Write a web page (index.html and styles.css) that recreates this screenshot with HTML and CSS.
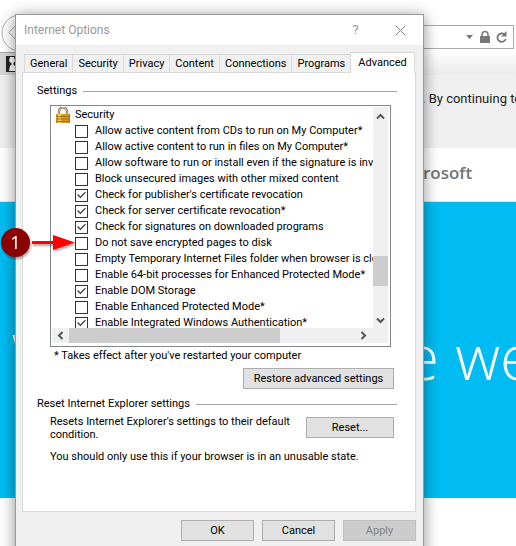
FILE: index.html
```html
<!DOCTYPE html>
<html lang="en">
<head>
<meta charset="utf-8">
<title>Internet Options</title>
<link rel="stylesheet" href="styles.css">
</head>
<body>
<div class="browser">
  <header class="navbar">
    <svg class="back" width="38" height="38" viewBox="0 0 38 38" fill="none" stroke="#b0b0b0"><circle cx="19" cy="19" r="18"/><path d="M17 9 8 18.500l9 9.500"/></svg>
    <div class="address">
      <svg width="8" height="4" viewBox="0 0 8 4"><path d="M0 0h7L3.500 4z" fill="#777"/></svg>
      <svg width="10" height="12" viewBox="0 0 10 12"><path d="M0 5h10v7H0z" fill="#777"/><path d="M2 6V3.500a3 3 0 0 1 6 0V6" fill="none" stroke="#777" stroke-width="1.500"/></svg>
      <svg width="11" height="12" viewBox="0 0 11 12"><path d="M8.500 3.500A4.200 4.200 0 1 0 9.700 8" fill="none" stroke="#777" stroke-width="1.800"/><path d="M10.500 0v5.500H5z" fill="#777"/></svg>
    </div>
  </header>
  <div class="tabstrip">
    <div class="browser-tab">
      <svg width="14" height="16" viewBox="0 0 14 16"><path d="M0 0h14v16H0z" fill="#202528"/><path d="M4 1h4l1 4-2 3 3 3v4H3l1-5 2-2-3-3z" fill="#fff"/></svg>
    </div>
  </div>
  <div class="notice">. By continuing to</div>
  <div class="brand"><span class="more">⋮</span><span>rosoft</span></div>
  <div class="hero"><span>W</span><span class="hero-end">e we</span></div>
</div>

<main class="dialog">
  <header class="titlebar">
    <h1>Internet Options</h1>
    <button class="title-btn" aria-label="Help">?</button>
    <button class="title-btn" aria-label="Close"><svg width="11" height="11" viewBox="0 0 11 11"><path d="M.5.5l10 10M10.500.5l-10 10" stroke="#858585"/></svg></button>
  </header>
  <div class="content">
    <nav class="tabs" role="tablist">
      <button role="tab">General</button>
      <button role="tab">Security</button>
      <button role="tab">Privacy</button>
      <button role="tab">Content</button>
      <button role="tab">Connections</button>
      <button role="tab">Programs</button>
      <button role="tab" class="active" aria-selected="true">Advanced</button>
    </nav>
    <section class="panel">
      <h2>Settings</h2>
      <div class="listbox">
        <div class="options">
          <div class="category">
            <svg width="14" height="16" viewBox="0 0 14 16"><path d="M3 8V4.500a4 4 0 0 1 8 0V8" fill="none" stroke="#8a7440" stroke-width="2.500"/><path d="M3 8V4.500a4 4 0 0 1 8 0V8" fill="none" stroke="#d9cda6"/><path d="M0 7h14v9H0z" fill="#d39a22"/><path d="M2 7h3v9H2z" fill="#f3cf62"/><path d="M0 9.500h14M0 12h14M0 14.500h14M13.500 7v9" stroke="#a87412"/></svg>
            <span>Security</span>
          </div>
          <label><input type="checkbox">Allow active content from CDs to run on My Computer*</label>
          <label><input type="checkbox">Allow active content to run in files on My Computer*</label>
          <label><input type="checkbox">Allow software to run or install even if the signature is inva</label>
          <label><input type="checkbox">Block unsecured images with other mixed content</label>
          <label><input type="checkbox" checked>Check for publisher's certificate revocation</label>
          <label><input type="checkbox" checked>Check for server certificate revocation*</label>
          <label><input type="checkbox" checked>Check for signatures on downloaded programs</label>
          <label><input type="checkbox">Do not save encrypted pages to disk</label>
          <label><input type="checkbox">Empty Temporary Internet Files folder when browser is clo</label>
          <label><input type="checkbox">Enable 64-bit processes for Enhanced Protected Mode*</label>
          <label><input type="checkbox" checked>Enable DOM Storage</label>
          <label><input type="checkbox">Enable Enhanced Protected Mode*</label>
          <label><input type="checkbox" checked>Enable Integrated Windows Authentication*</label>
        </div>
        <div class="vbar">
          <svg width="9" height="7" viewBox="0 0 9 7"><path d="M1 5.500 4.500 2 8 5.500" fill="none" stroke="#555" stroke-width="2"/></svg>
          <div class="vthumb"></div>
          <svg width="9" height="7" viewBox="0 0 9 7"><path d="M1 1.500 4.500 5 8 1.500" fill="none" stroke="#555" stroke-width="2"/></svg>
        </div>
        <div class="hbar">
          <svg width="7" height="9" viewBox="0 0 7 9"><path d="M5.500 1 2 4.500 5.500 8" fill="none" stroke="#555" stroke-width="2"/></svg>
          <div class="hthumb"></div>
          <svg width="7" height="9" viewBox="0 0 7 9"><path d="M1.500 1 5 4.500 1.500 8" fill="none" stroke="#555" stroke-width="2"/></svg>
        </div>
      </div>
      <p class="footnote">* Takes effect after you've restarted your computer</p>
      <button class="btn restore">Restore advanced settings</button>
      <h2>Reset Internet Explorer settings</h2>
      <div class="reset">
        <p>Resets Internet Explorer's settings to their default condition.</p>
        <button class="btn">Reset...</button>
      </div>
      <p class="warning">You should only use this if your browser is in an unusable state.</p>
    </section>
    <footer class="actions">
      <button class="btn">OK</button>
      <button class="btn">Cancel</button>
      <button class="btn" disabled>Apply</button>
    </footer>
  </div>
</main>

<div class="callout">
  <span class="badge">1</span>
  <svg width="46" height="20" viewBox="0 0 46 20"><path d="M1 8h21V2l22 7.500L22 17v-6H1z" fill="#f00"/></svg>
</div>
</body>
</html>
```
FILE: styles.css
```css
* { box-sizing: border-box; }

body {
  margin: 0;
  position: relative;
  height: 100vh;
  overflow: hidden;
  background: #fff;
  color: #000;
  font: 11px/16px Roboto, sans-serif;
}

h1, h2, p { margin: 0; font-size: inherit; font-weight: normal; }
button { font: inherit; color: inherit; padding: 0; }
svg { flex: none; display: block; }

/* Browser behind the dialog */
.navbar { display: flex; align-items: flex-end; height: 52px; padding-right: 2px; }
.back { margin-left: 1px; }
.address {
  flex: 1;
  display: flex;
  align-items: center;
  justify-content: flex-end;
  gap: 6px;
  height: 24px;
  margin-bottom: 3px;
  padding-right: 6px;
  border: 1px solid #aaa;
}
.tabstrip { height: 23px; background: linear-gradient(#fff, #ebebeb); }
.browser-tab {
  width: 200px;
  height: 23px;
  padding: 3px 6px;
  background: #d6d6d6;
  border-top: 1px solid #a9a9a9;
}
.notice {
  height: 73px;
  padding: 14px 0 0 422px;
  background: #f0f0f0;
  color: #222;
  font: 13px/20px Roboto, sans-serif;
  white-space: nowrap;
}
.brand {
  display: flex;
  align-items: center;
  height: 54px;
  padding: 0 0 4px 12px;
  color: #737373;
  font: 600 17px/24px "Open Sans", sans-serif;
  border-bottom: 1px solid #e3e3e3;
}
.more { width: 411px; color: #333; }
.hero {
  display: flex;
  align-items: center;
  justify-content: space-between;
  height: 296px;
  padding: 12px 0 0 11px;
  background: #00bcf2;
  color: #fff;
  font: 300 62px/80px "Open Sans", sans-serif;
  white-space: nowrap;
}
.hero-end { margin-right: -18px; }

/* Dialog window */
.dialog {
  position: absolute;
  top: 14px;
  left: 15px;
  right: 92px;
  background: #f0f0f0;
  border: 1px solid #999;
  box-shadow: 0 2px 14px rgba(0, 0, 0, 0.45);
}
.titlebar {
  display: flex;
  align-items: center;
  height: 30px;
  padding-left: 8px;
  background: #fff;
  color: #999;
  font-size: 12px;
}
.titlebar h1 { flex: 1; }
.title-btn {
  display: grid;
  place-items: center;
  width: 45px;
  height: 30px;
  border: 0;
  background: none;
  font-size: 13px;
}
.content { padding: 7px 7px 24px 6px; }

.tabs { display: flex; align-items: flex-end; padding-left: 2px; }
.tabs button {
  height: 18px;
  padding: 0 5px;
  border: 1px solid #d9d9d9;
  border-width: 1px 0 0 1px;
  background: #f0f0f0;
  line-height: 17px;
}
.tabs .active {
  height: 21px;
  margin-bottom: -1px;
  padding: 0 7px 2px;
  border-right-width: 1px;
  background: #fff;
}
.panel {
  height: 440px;
  padding: 10px 18px 0 14px;
  border: 1px solid #d9d9d9;
  background: #fff;
}
.panel h2 { display: flex; align-items: center; gap: 6px; }
.panel h2::after { content: ""; flex: 1; border-top: 1px solid #a0a0a0; }

.listbox {
  display: grid;
  grid-template-columns: 1fr 15px;
  grid-template-rows: 221px 15px;
  height: 242px;
  margin: 6px 6px 0 13px;
  padding: 1px 2px 1px 1px;
  border: 1px solid #828790;
}
.options { overflow: hidden; white-space: nowrap; }
.category { display: flex; align-items: center; gap: 5px; height: 16px; padding-left: 4px; }
.options label { display: flex; align-items: center; gap: 7px; height: 16px; padding-left: 23px; }
.options input {
  flex: none;
  appearance: none;
  width: 13px;
  height: 13px;
  margin: 0;
  border: 1px solid #333;
  background: #fff;
}
.options input:checked::before {
  content: "";
  display: block;
  height: 11px;
  background: #333;
  clip-path: polygon(10% 50%, 18% 42%, 40% 64%, 82% 20%, 90% 28%, 40% 80%);
}
.vbar, .hbar { display: flex; align-items: center; background: #f0f0f0; }
.vbar { flex-direction: column; padding: 6px 0 4px; }
.vthumb { width: 15px; height: 30px; margin: 136px 0 auto; background: #cdcdcd; }
.hbar { grid-column: 1 / 3; padding: 0 21px 0 5px; }
.hthumb { width: 68%; height: 15px; margin: 0 auto 0 5px; background: #cdcdcd; }

.footnote { margin: 1px 0 0 17px; }
.btn {
  display: block;
  flex: none;
  width: 73px;
  height: 21px;
  border: 1px solid #adadad;
  background: #e1e1e1;
  line-height: 18px;
}
.btn:disabled { background: #ccc; border-color: #bfbfbf; color: #838383; }
.restore { width: 151px; margin: 4px 3px 7px auto; }
.reset { display: flex; justify-content: space-between; padding: 3px 3px 0 13px; }
.reset p { width: 250px; line-height: 13px; }
.reset .btn { width: 88px; margin-top: 2px; }
.warning { margin: 8px 0 0 13px; }
.actions { display: flex; justify-content: flex-end; gap: 8px; padding-top: 8px; }

/* Numbered callout over the dialog */
.callout {
  position: absolute;
  top: 228px;
  left: 1px;
  display: flex;
  align-items: center;
  gap: 1px;
  filter: drop-shadow(1px 2px 1px rgba(0, 0, 0, 0.35));
}
.badge {
  width: 29px;
  height: 29px;
  border-radius: 50%;
  background: #8b0000;
  color: #fff;
  font: 18px/28px "Noto Sans", sans-serif;
  text-align: center;
}
```
